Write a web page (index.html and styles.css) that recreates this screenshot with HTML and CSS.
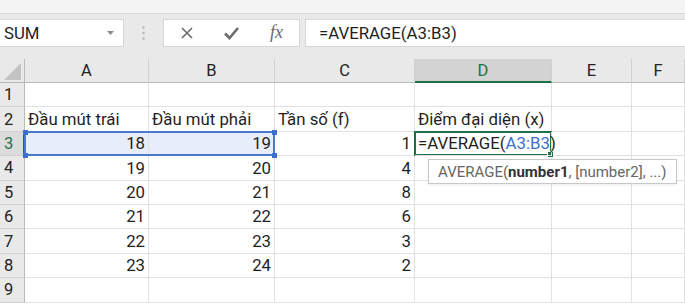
FILE: index.html
```html
<!DOCTYPE html>
<html lang="vi">
<head>
    <meta charset="UTF-8">
    <title>Sheet1</title>
    <link rel="stylesheet" href="styles.css">
</head>
<body>
    <div class="ribbon"></div>

    <div class="fbar">
        <div class="namebox">
            <span>SUM</span>
            <svg width="7" height="4" viewBox="0 0 7 4"><path d="M0 0 L7 0 L3.5 4 Z" fill="#8a8a8a"/></svg>
        </div>
        <div class="grip">
            <svg width="3" height="14" viewBox="0 0 3 14">
                <circle cx="1.5" cy="1.5" r="1.2" fill="#b5b5b5"/>
                <circle cx="1.5" cy="7" r="1.2" fill="#b5b5b5"/>
                <circle cx="1.5" cy="12.5" r="1.2" fill="#b5b5b5"/>
            </svg>
        </div>
        <div class="fbtns">
            <span class="slot">
                <svg width="14" height="14" viewBox="0 0 14 14"><path d="M2 2 L12 12 M12 2 L2 12" stroke="#6b6b6b" stroke-width="1.6" fill="none"/></svg>
            </span>
            <span class="slot">
                <svg width="17" height="14" viewBox="0 0 17 14"><path d="M2 7.5 L6.5 12 L15 2" stroke="#6b6b6b" stroke-width="2.6" fill="none"/></svg>
            </span>
            <span class="slot fx">fx</span>
        </div>
        <div class="finput">=AVERAGE(A3:B3)</div>
    </div>

    <div class="sheet">
        <div class="corner"><span class="tri"></span></div>
        <div class="ch">A</div>
        <div class="ch">B</div>
        <div class="ch">C</div>
        <div class="ch on">D</div>
        <div class="ch">E</div>
        <div class="ch">F</div>

        <div class="rh">1</div>
        <div class="c"></div><div class="c"></div><div class="c"></div><div class="c"></div><div class="c"></div><div class="c"></div>

        <div class="rh">2</div>
        <div class="c">Đầu mút trái</div>
        <div class="c">Đầu mút phải</div>
        <div class="c">Tần số (f)</div>
        <div class="c">Điểm đại diện (x)</div>
        <div class="c"></div><div class="c"></div>

        <div class="rh on">3</div>
        <div class="c n sel">18</div>
        <div class="c n sel">19</div>
        <div class="c n">1</div>
        <div class="c edit">=AVERAGE(<span class="ref">A3:</span><span class="caret"></span><span class="ref">B3</span>)</div>
        <div class="c"></div><div class="c"></div>

        <div class="rh">4</div>
        <div class="c n">19</div><div class="c n">20</div><div class="c n">4</div>
        <div class="c"></div><div class="c"></div><div class="c"></div>

        <div class="rh">5</div>
        <div class="c n">20</div><div class="c n">21</div><div class="c n">8</div>
        <div class="c"></div><div class="c"></div><div class="c"></div>

        <div class="rh">6</div>
        <div class="c n">21</div><div class="c n">22</div><div class="c n">6</div>
        <div class="c"></div><div class="c"></div><div class="c"></div>

        <div class="rh">7</div>
        <div class="c n">22</div><div class="c n">23</div><div class="c n">3</div>
        <div class="c"></div><div class="c"></div><div class="c"></div>

        <div class="rh">8</div>
        <div class="c n">23</div><div class="c n">24</div><div class="c n">2</div>
        <div class="c"></div><div class="c"></div><div class="c"></div>

        <div class="rh">9</div>
        <div class="c"></div><div class="c"></div><div class="c"></div>
        <div class="c"></div><div class="c"></div><div class="c"></div>

        <!-- range highlight A3:B3 -->
        <div class="range">
            <span class="h tl"></span><span class="h tr"></span>
            <span class="h bl"></span><span class="h br"></span>
        </div>
        <!-- active cell D3 -->
        <div class="active"><span class="fill"></span></div>

        <div class="tip">AVERAGE(<b>number1</b>, [number2], ...)</div>
    </div>
</body>
</html>
```

FILE: styles.css
```css
body{
    margin: 0px;
    width: 685px;
    height: 305px;
    overflow: hidden;
    background-color: #fff;
    font-family: Roboto, "Liberation Sans", sans-serif;
    color: #1f1f1f;
}
.ribbon{
    height: 13px;
    background-color: #f4f4f4;
    border-bottom: 1px solid #dadada;
}
.fbar{
    height: 45px;
    background-color: #e9e9e9;
    display: flex;
    align-items: flex-start;
    padding-top: 5px;
    box-sizing: border-box;
}
.namebox{
    width: 124px;
    height: 28px;
    box-sizing: border-box;
    background-color: #fff;
    border: 1px solid #d6d6d6;
    border-left: none;
    display: flex;
    align-items: center;
    justify-content: space-between;
    padding: 0px 9px 0px 4px;
    font-size: 16.8px;
}
.grip{
    width: 39px;
    height: 28px;
    display: flex;
    justify-content: center;
    align-items: center;
}
.fbtns{
    width: 137px;
    height: 28px;
    box-sizing: border-box;
    background-color: #fff;
    border: 1px solid #d6d6d6;
    display: flex;
    align-items: center;
}
.slot{
    width: 46px;
    display: flex;
    justify-content: center;
    align-items: center;
}
.fx{
    font-family: "Liberation Serif", serif;
    font-style: italic;
    font-size: 18px;
    color: #6b6b6b;
    margin-top: -2px;
}
.finput{
    flex: 1;
    margin-left: 5px;
    height: 28px;
    box-sizing: border-box;
    background-color: #fff;
    border: 1px solid #d6d6d6;
    border-right: none;
    padding-left: 13px;
    display: flex;
    align-items: center;
    font-size: 16.8px;
}
.sheet{
    position: relative;
    display: grid;
    grid-template-columns: 25px 124px 126px 140px 137px 80px 53px;
    grid-template-rows: 24px repeat(9, 24.4px);
}
.corner{
    background-color: #e9e9e9;
    border-right: 1px solid #bababa;
    border-bottom: 1px solid #bababa;
    box-sizing: border-box;
    position: relative;
}
.tri{
    position: absolute;
    right: 3px;
    bottom: 2px;
    width: 0;
    height: 0;
    border-left: 17px solid transparent;
    border-bottom: 17px solid #c3c3c3;
}
.ch{
    background-color: #e9e9e9;
    border-right: 1px solid #d0d0d0;
    border-bottom: 1px solid #bababa;
    box-sizing: border-box;
    display: flex;
    justify-content: center;
    align-items: center;
    font-size: 16.5px;
    color: #222;
}
.ch.on{
    background-color: #d3d3d3;
    color: #1e7145;
    border-bottom: 2px solid #1e7145;
}
.rh{
    background-color: #e9e9e9;
    border-right: 1px solid #bababa;
    border-bottom: 1px solid #d0d0d0;
    box-sizing: border-box;
    display: flex;
    align-items: center;
    padding-left: 4px;
    font-size: 16.5px;
    color: #222;
}
.rh.on{
    background-color: #dcdcdc;
    color: #1e7145;
    border-right: 2px solid #1e7145;
}
.c{
    border-right: 1px solid #e1e1e1;
    border-bottom: 1px solid #e1e1e1;
    box-sizing: border-box;
    display: flex;
    align-items: flex-end;
    padding: 0px 3px 2px 3px;
    font-size: 16.8px;
    white-space: nowrap;
}
.n{
    justify-content: flex-end;
}
.sel{
    background-color: #e8eef9;
}
.edit{
    overflow: visible;
    position: relative;
    z-index: 2;
}
.ref{
    color: #3c6fce;
}
.caret{
    display: inline-block;
    width: 1px;
    height: 21px;
    background-color: #222;
    margin-bottom: -3px;
}
.range{
    position: absolute;
    left: 24px;
    top: 72px;
    width: 251px;
    height: 25px;
    box-sizing: border-box;
    border: 2px solid #4a78cf;
}
.h{
    position: absolute;
    width: 5px;
    height: 5px;
    background-color: #3c6fce;
}
.tl{ left: -3px; top: -3px; }
.tr{ right: -4px; top: -3px; }
.bl{ left: -3px; bottom: -4px; }
.br{ right: -4px; bottom: -4px; }
.active{
    position: absolute;
    left: 414px;
    top: 72px;
    width: 138px;
    height: 25px;
    box-sizing: border-box;
    border: 2px solid #1e7145;
}
.fill{
    position: absolute;
    right: -4px;
    bottom: -4px;
    width: 5px;
    height: 5px;
    background-color: #1e7145;
    border: 1px solid #fff;
}
.tip{
    position: absolute;
    left: 428px;
    top: 100px;
    width: 249px;
    height: 25px;
    box-sizing: border-box;
    background-color: #fff;
    border: 1px solid #c8c8c8;
    box-shadow: 0 1px 2px rgba(0, 0, 0, 0.08);
    padding-left: 9px;
    display: flex;
    align-items: center;
    font-size: 15px;
    color: #666;
    white-space: nowrap;
    z-index: 3;
}
.tip b{
    color: #333;
}
```
